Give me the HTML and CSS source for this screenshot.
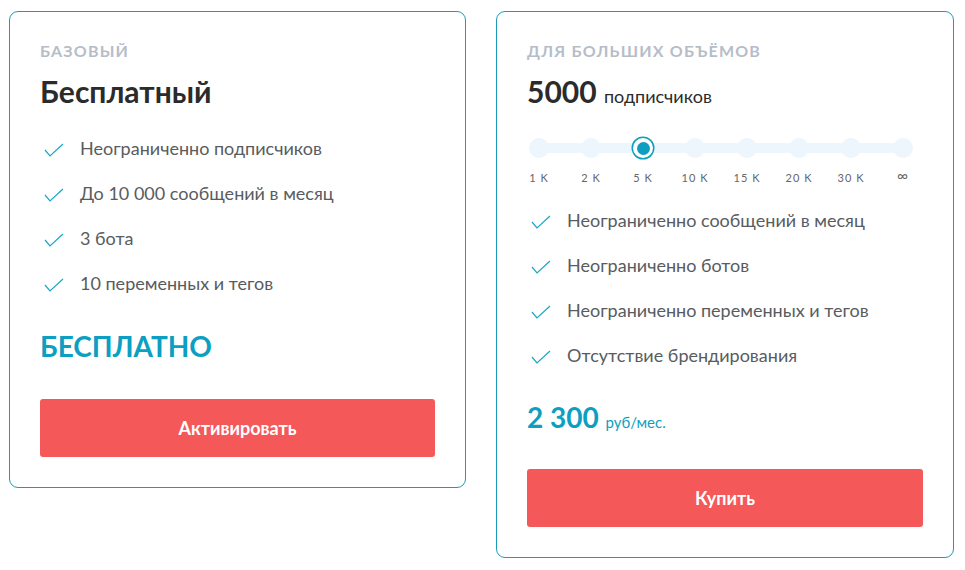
FILE: index.html
```html
<!DOCTYPE html>
<html lang="ru">
<head>
<meta charset="utf-8">
<link rel="stylesheet" href="styles.css">
</head>
<body>
<div class="plans">
  <section class="card">
    <div class="label">БАЗОВЫЙ</div>
    <h2 class="title">Бесплатный</h2>
    <ul class="features">
      <li><svg class="check" viewBox="0 0 20 14"><path d="M1 7 L6 13 L19 1"/></svg>Неограниченно подписчиков</li>
      <li><svg class="check" viewBox="0 0 20 14"><path d="M1 7 L6 13 L19 1"/></svg>До 10 000 сообщений в месяц</li>
      <li><svg class="check" viewBox="0 0 20 14"><path d="M1 7 L6 13 L19 1"/></svg>3 бота</li>
      <li><svg class="check" viewBox="0 0 20 14"><path d="M1 7 L6 13 L19 1"/></svg>10 переменных и тегов</li>
    </ul>
    <div class="price free">БЕСПЛАТНО</div>
    <button class="btn btn-free">Активировать</button>
  </section>

  <section class="card">
    <div class="label">ДЛЯ БОЛЬШИХ ОБЪЁМОВ</div>
    <h2 class="title">5000 <span class="unit">подписчиков</span></h2>
    <div class="slider">
      <div class="stop"><span class="dot"></span><span class="tick">1 K</span></div>
      <div class="stop"><span class="dot"></span><span class="tick">2 K</span></div>
      <div class="stop"><span class="dot active"><span class="core"></span></span><span class="tick">5 K</span></div>
      <div class="stop"><span class="dot"></span><span class="tick">10 K</span></div>
      <div class="stop"><span class="dot"></span><span class="tick">15 K</span></div>
      <div class="stop"><span class="dot"></span><span class="tick">20 K</span></div>
      <div class="stop"><span class="dot"></span><span class="tick">30 K</span></div>
      <div class="stop"><span class="dot"></span><span class="tick inf">∞</span></div>
    </div>
    <ul class="features tight">
      <li><svg class="check" viewBox="0 0 20 14"><path d="M1 7 L6 13 L19 1"/></svg>Неограниченно сообщений в месяц</li>
      <li><svg class="check" viewBox="0 0 20 14"><path d="M1 7 L6 13 L19 1"/></svg>Неограниченно ботов</li>
      <li><svg class="check" viewBox="0 0 20 14"><path d="M1 7 L6 13 L19 1"/></svg>Неограниченно переменных и тегов</li>
      <li><svg class="check" viewBox="0 0 20 14"><path d="M1 7 L6 13 L19 1"/></svg>Отсутствие брендирования</li>
    </ul>
    <div class="price">2 300 <span class="per">руб/мес.</span></div>
    <button class="btn">Купить</button>
  </section>
</div>
</body>
</html>
```
FILE: styles.css
```css
* { box-sizing: border-box; }
body {
  margin: 0;
  background: #fff;
  font-family: "Lato", "Noto Sans", sans-serif;
  color: #2d2d2d;
}
.plans {
  display: flex;
  align-items: flex-start;
  gap: 30px;
  padding: 11px 0 0 9px;
}
.card {
  border: 1px solid #1b9bba;
  border-radius: 9px;
  padding: 29px 30px 30px 30px;
  display: flex;
  flex-direction: column;
}
.card:first-child { width: 457px; }
.card:last-child { width: 458px; }
.label {
  font-size: 16px;
  line-height: 20px;
  font-weight: 700;
  letter-spacing: 1.2px;
  color: #b6bdc9;
}
.title {
  margin: 12px 0 0;
  font-size: 30px;
  line-height: 36px;
  font-weight: 700;
  color: #2b2b2b;
}
.unit {
  font-size: 18px;
  line-height: 1;
  font-weight: 400;
}
.features {
  list-style: none;
  margin: 27px 0 0;
  padding: 0;
  display: flex;
  flex-direction: column;
  gap: 21px;
}
.features.tight { margin-top: 23px; }
.features li {
  display: flex;
  align-items: center;
  gap: 16px;
  font-size: 18px;
  line-height: 24px;
  color: #585c60;
}
.check {
  width: 20px;
  height: 14px;
  margin-left: 4px;
  margin-top: 4px;
  flex: none;
  fill: none;
  stroke: #1aa6c6;
  stroke-width: 1.2;
}
.price {
  margin-top: 32px;
  font-size: 28px;
  line-height: 36px;
  font-weight: 700;
  color: #0c9fc1;
}
.price.free { margin-top: 33px; }
.per {
  font-size: 15px;
  line-height: 1;
  font-weight: 400;
}
.btn {
  margin-top: 34px;
  height: 58px;
  border: none;
  border-radius: 3px;
  background: #f55858;
  color: #fff;
  font-family: inherit;
  font-size: 18px;
  font-weight: 700;
}
.btn.btn-free { margin-top: 35px; }
.slider {
  position: relative;
  margin: 29px 0 0 2px;
  width: 384px;
  display: flex;
  justify-content: space-between;
}
.slider::before {
  content: "";
  position: absolute;
  left: 10px;
  right: 10px;
  top: 5px;
  height: 10px;
  background: #edf5fd;
}
.stop {
  position: relative;
  width: 20px;
  display: flex;
  flex-direction: column;
  align-items: center;
}
.dot {
  width: 20px;
  height: 20px;
  border-radius: 50%;
  background: #edf5fd;
  display: flex;
  align-items: center;
  justify-content: center;
}
.dot.active {
  background: #fff;
  box-shadow: 0 0 0 1.5px #0c9fc1;
}
.core {
  width: 13px;
  height: 13px;
  border-radius: 50%;
  background: #0c9fc1;
}
.tick {
  margin-top: 13px;
  font-size: 11px;
  line-height: 14px;
  letter-spacing: 1px;
  color: #666;
  white-space: nowrap;
}
.tick.inf { font-size: 15px; line-height: 12px; margin-top: 11px; }
```
